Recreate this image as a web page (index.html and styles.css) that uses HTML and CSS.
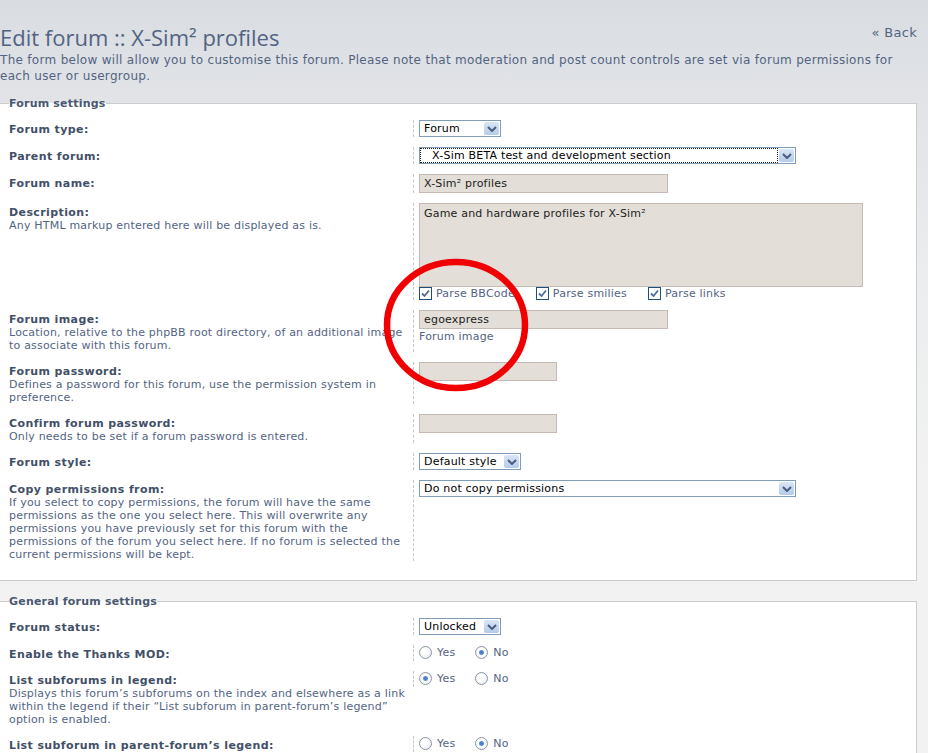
FILE: index.html
```html
<!DOCTYPE html>
<html lang="en">
<head>
    <meta charset="UTF-8">
    <title>Edit forum :: X-Sim² profiles</title>
    <link rel="stylesheet" href="styles.css">
</head>
<body>
    <div class="page">
        <a class="back" href="#">&laquo; Back</a>
        <h1>Edit forum :: X-Sim² profiles</h1>
        <p class="intro">The form below will allow you to customise this forum. Please note that moderation and post count controls are set via forum permissions for each user or usergroup.</p>

        <form>
            <!-- Forum settings -->
            <fieldset>
                <legend>Forum settings</legend>
                <dl>
                    <dt><label>Forum type:</label></dt>
                    <dd><span class="select w-type">Forum<span class="arrow"><svg viewBox="0 0 10 6" width="10" height="6"><path d="M1 1 L5 5 L9 1" fill="none" stroke="#4a5b80" stroke-width="2"/></svg></span></span></dd>
                </dl>
                <dl>
                    <dt><label>Parent forum:</label></dt>
                    <dd><span class="select w-wide focus"><span class="focus-box">&nbsp;&nbsp;&nbsp;X-Sim BETA test and development section</span><span class="arrow"><svg viewBox="0 0 10 6" width="10" height="6"><path d="M1 1 L5 5 L9 1" fill="none" stroke="#4a5b80" stroke-width="2"/></svg></span></span></dd>
                </dl>
                <dl>
                    <dt><label>Forum name:</label></dt>
                    <dd><span class="input w-name">X-Sim² profiles</span></dd>
                </dl>
                <dl>
                    <dt><label>Description:</label><br><span class="explain">Any HTML markup entered here will be displayed as is.</span></dt>
                    <dd>
                        <span class="textarea">Game and hardware profiles for X-Sim²</span>
                        <div class="checks">
                            <label><span class="checkbox"><svg viewBox="0 0 13 13" width="13" height="13"><path d="M3 6.5 L5.5 9 L10 3.5" fill="none" stroke="#4d6a9a" stroke-width="1.8"/></svg></span>Parse BBCode</label>
                            <label><span class="checkbox"><svg viewBox="0 0 13 13" width="13" height="13"><path d="M3 6.5 L5.5 9 L10 3.5" fill="none" stroke="#4d6a9a" stroke-width="1.8"/></svg></span>Parse smilies</label>
                            <label><span class="checkbox"><svg viewBox="0 0 13 13" width="13" height="13"><path d="M3 6.5 L5.5 9 L10 3.5" fill="none" stroke="#4d6a9a" stroke-width="1.8"/></svg></span>Parse links</label>
                        </div>
                    </dd>
                </dl>
                <dl>
                    <dt><label>Forum image:</label><br><span class="explain">Location, relative to the phpBB root directory, of an additional image to associate with this forum.</span></dt>
                    <dd><span class="input w-name">egoexpress</span><div class="hint">Forum image</div></dd>
                </dl>
                <dl>
                    <dt><label>Forum password:</label><br><span class="explain">Defines a password for this forum, use the permission system in preference.</span></dt>
                    <dd><span class="input w-pass"></span></dd>
                </dl>
                <dl>
                    <dt><label>Confirm forum password:</label><br><span class="explain">Only needs to be set if a forum password is entered.</span></dt>
                    <dd><span class="input w-pass"></span></dd>
                </dl>
                <dl>
                    <dt><label>Forum style:</label></dt>
                    <dd><span class="select w-style">Default style<span class="arrow"><svg viewBox="0 0 10 6" width="10" height="6"><path d="M1 1 L5 5 L9 1" fill="none" stroke="#4a5b80" stroke-width="2"/></svg></span></span></dd>
                </dl>
                <dl>
                    <dt><label>Copy permissions from:</label><br><span class="explain">If you select to copy permissions, the forum will have the same permissions as the one you select here. This will overwrite any permissions you have previously set for this forum with the permissions of the forum you select here. If no forum is selected the current permissions will be kept.</span></dt>
                    <dd><span class="select w-wide">Do not copy permissions<span class="arrow"><svg viewBox="0 0 10 6" width="10" height="6"><path d="M1 1 L5 5 L9 1" fill="none" stroke="#4a5b80" stroke-width="2"/></svg></span></span></dd>
                </dl>
            </fieldset>

            <!-- General forum settings -->
            <fieldset>
                <legend>General forum settings</legend>
                <dl>
                    <dt><label>Forum status:</label></dt>
                    <dd><span class="select w-type">Unlocked<span class="arrow"><svg viewBox="0 0 10 6" width="10" height="6"><path d="M1 1 L5 5 L9 1" fill="none" stroke="#4a5b80" stroke-width="2"/></svg></span></span></dd>
                </dl>
                <dl>
                    <dt><label>Enable the Thanks MOD:</label></dt>
                    <dd class="radios"><label><span class="radio"></span>Yes</label><label><span class="radio on"></span>No</label></dd>
                </dl>
                <dl>
                    <dt><label>List subforums in legend:</label><br><span class="explain">Displays this forum’s subforums on the index and elsewhere as a link within the legend if their “List subforum in parent-forum’s legend” option is enabled.</span></dt>
                    <dd class="radios"><label><span class="radio on"></span>Yes</label><label><span class="radio"></span>No</label></dd>
                </dl>
                <dl>
                    <dt><label>List subforum in parent-forum’s legend:</label></dt>
                    <dd class="radios"><label><span class="radio"></span>Yes</label><label><span class="radio on"></span>No</label></dd>
                </dl>
            </fieldset>
        </form>
    </div>

    <!-- red marker drawn over the screenshot -->
    <svg class="marker" width="160" height="150" viewBox="0 0 160 150">
        <ellipse cx="79" cy="71" rx="69" ry="63" fill="none" stroke="#f00000" stroke-width="6.5"/>
    </svg>
</body>
</html>
```

FILE: styles.css
```css
/* page */
body {
    margin: 0;
    background: linear-gradient(#d9dde2 0, #e1e3e7 100px, #eceeef 300px, #f2f2f2 500px);
    font-family: "DejaVu Sans", Verdana, sans-serif;
    font-size: 11px;
    letter-spacing: 0.2px;
    color: #536482;
    min-height: 753px;
    overflow: hidden;
}

.page {
    width: 917px;
    position: relative;
}

.back {
    float: right;
    margin-top: 25px;
    font-size: 13px;
    line-height: 16px;
    letter-spacing: 0.3px;
    color: #536482;
    text-decoration: none;
}

h1 {
    margin: 0;
    padding-top: 22px;
    font-family: "Open Sans", sans-serif;
    font-weight: normal;
    font-size: 22px;
    line-height: 30px;
    letter-spacing: 0;
    color: #536482;
}

.intro {
    margin: 0 0 13px;
    font-size: 12px;
    line-height: 16px;
    letter-spacing: 0.3px;
    color: #536482;
}

/* fieldsets */
fieldset {
    margin: 0 0 14px;
    padding: 5px 0 14px 9px;
    border: 1px solid #cccccc;
    border-left: none;
    background: #fff;
}

legend {
    padding: 0;
    font-weight: bold;
    font-size: 11px;
    letter-spacing: 0.2px;
    color: #4a5870;
}

dl {
    display: grid;
    grid-template-columns: 404px 1fr;
    margin: 0;
    padding: 5px 0;
}

dt {
    padding: 3px 4px 0 0;
    line-height: 13px;
}

dt label {
    font-weight: bold;
    letter-spacing: 0.4px;
    color: #425067;
}

.explain {
    color: #536482;
}

dd {
    margin: 0;
    padding-left: 5px;
    border-left: 1px dashed #c8c8c8;
    line-height: 13px;
}

/* form controls */
.select {
    display: flex;
    align-items: center;
    box-sizing: border-box;
    height: 17px;
    padding: 0 1px 0 4px;
    border: 1px solid #7f9db9;
    background: #fff;
    color: #000;
}

.select .arrow {
    margin-left: auto;
    width: 15px;
    height: 13px;
    display: flex;
    align-items: center;
    justify-content: center;
    border-radius: 2px;
    background: linear-gradient(#d9e6f6, #b4cbe8);
}

.select.focus {
    padding-left: 1px;
}

.focus-box {
    flex: 1;
    margin-right: 2px;
    outline: 1px dotted #222;
    line-height: 11px;
    padding: 1px 0;
}

.w-type { width: 82px; }
.w-style { width: 102px; }
.w-wide { width: 377px; }
.w-name { width: 249px; }
.w-pass { width: 138px; }

.input,
.textarea {
    display: block;
    box-sizing: border-box;
    height: 19px;
    padding: 2px 4px;
    border: 1px solid #c4bab3;
    background: #e3ded8;
    color: #222;
}

.textarea {
    width: 444px;
    height: 84px;
    padding: 3px 4px;
}

.checks {
    display: flex;
    gap: 21px;
    height: 13px;
}

.checks label {
    display: flex;
    align-items: center;
    gap: 4px;
}

.checkbox {
    width: 13px;
    height: 13px;
    box-sizing: border-box;
    border: 1px solid #1c4f7e;
    background: #fff;
    display: flex;
    align-items: center;
    justify-content: center;
}

.checkbox svg {
    margin: -1px;
}

.hint {
    margin-top: 1px;
    color: #536482;
}

.radios {
    display: flex;
    align-items: flex-start;
    gap: 20px;
    height: 16px;
    color: #536482;
}

.radios label {
    display: flex;
    align-items: center;
    gap: 5px;
    height: 13px;
    padding-top: 1px;
}

.radio {
    width: 13px;
    height: 13px;
    box-sizing: border-box;
    border-radius: 50%;
    border: 1px solid #8b97a8;
    background: radial-gradient(circle at 40% 40%, #fff 30%, #dde2ea 100%);
}

.radio.on {
    background: radial-gradient(circle, #3d6fc0 0, #5c8fd6 2px, #fff 3px, #e8ebf0 100%);
}

/* red marker */
.marker {
    position: absolute;
    left: 377px;
    top: 254px;
}
```
